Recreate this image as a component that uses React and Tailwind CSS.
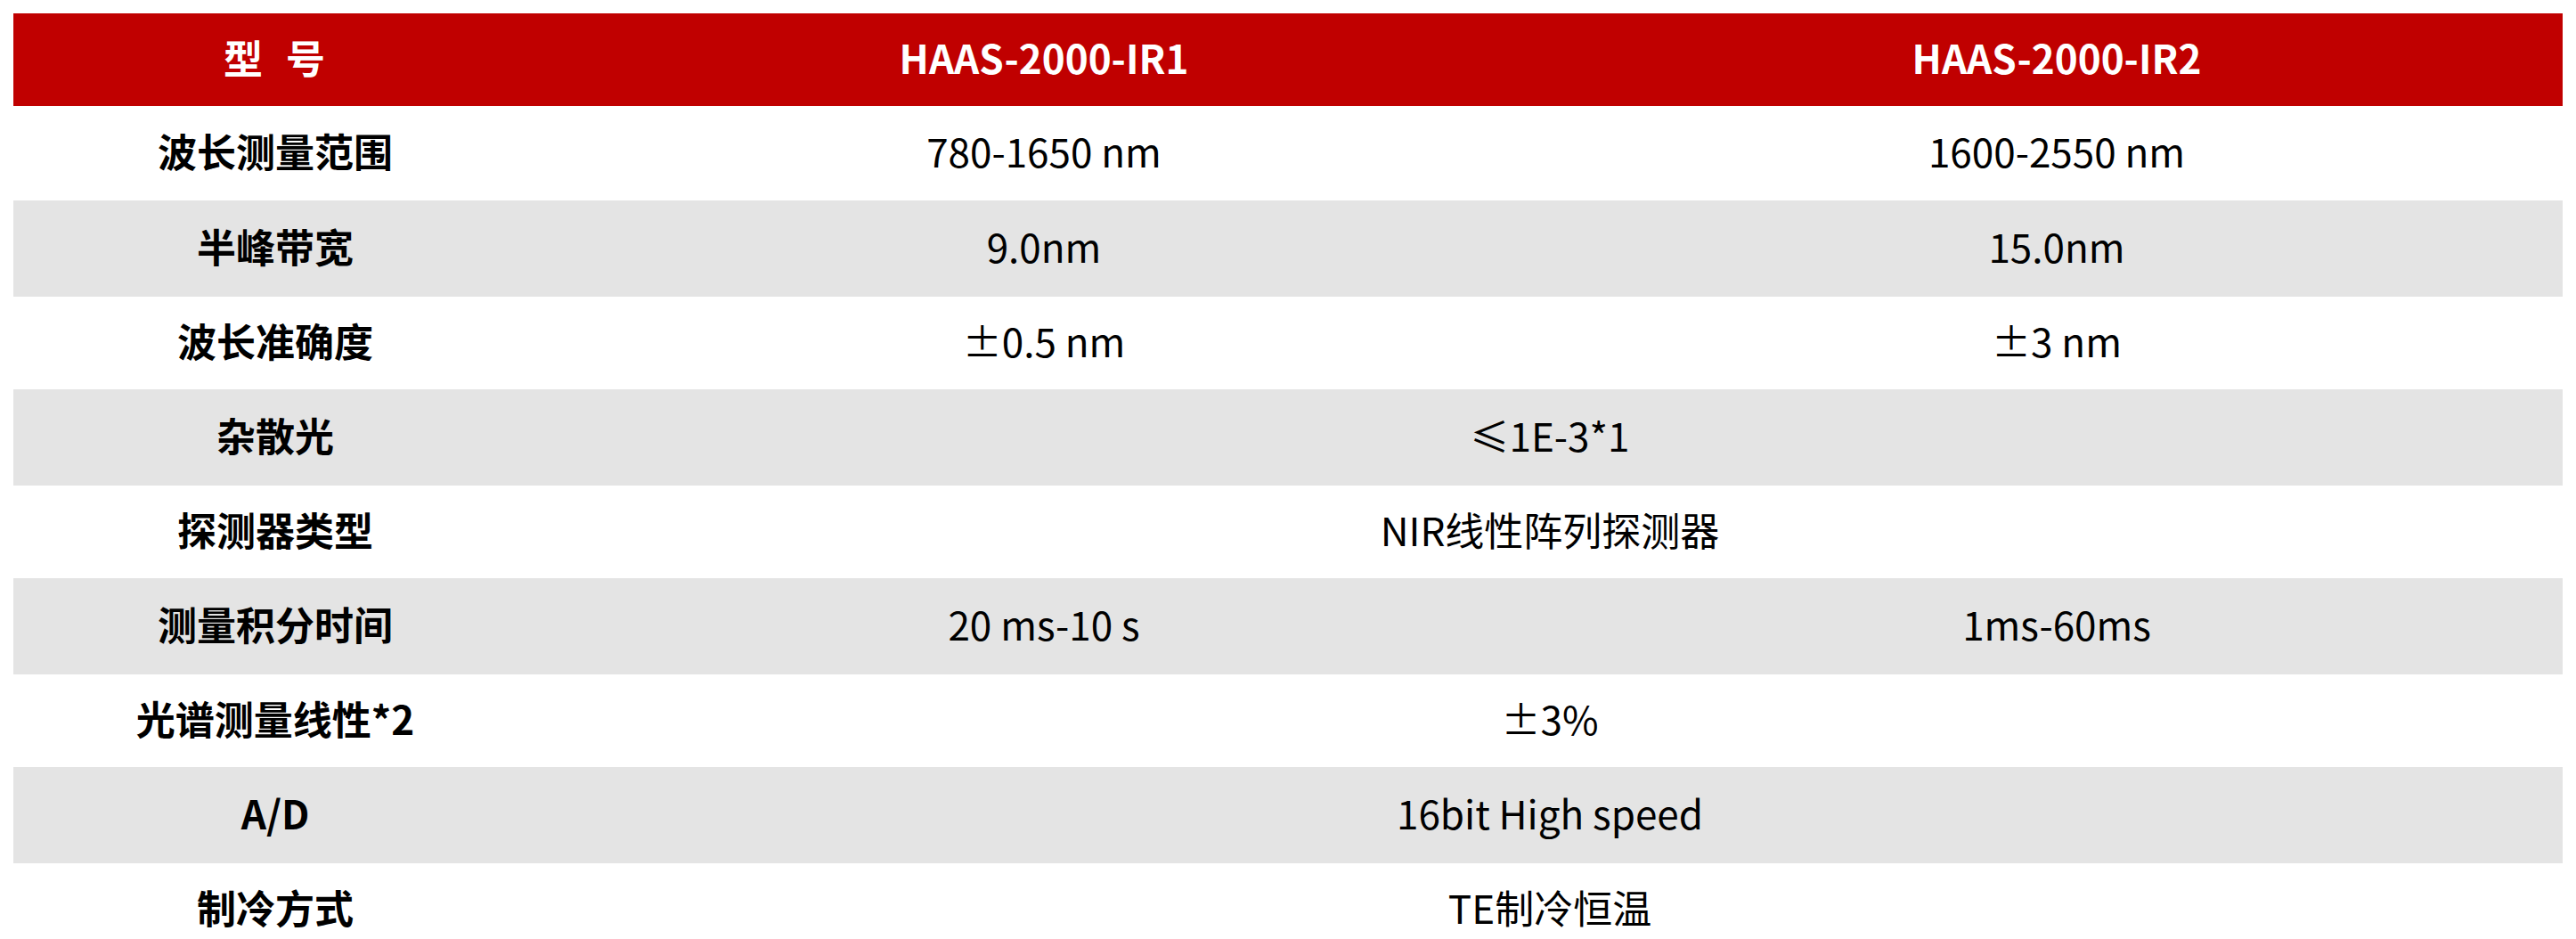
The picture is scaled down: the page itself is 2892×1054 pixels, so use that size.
import React from 'react';

const rows = [
  { label: '波长测量范围', a: '780-1650 nm', b: '1600-2550 nm' },
  { label: '半峰带宽', a: '9.0nm', b: '15.0nm' },
  { label: '波长准确度', a: '±0.5 nm', b: '±3 nm' },
  { label: '杂散光', span: '≤1E-3*1' },
  { label: '探测器类型', span: 'NIR线性阵列探测器' },
  { label: '测量积分时间', a: '20 ms-10 s', b: '1ms-60ms' },
  { label: '光谱测量线性*2', span: '±3%' },
  { label: 'A/D', span: '16bit High speed' },
  { label: '制冷方式', span: 'TE制冷恒温' },
];

const SpecRow = ({ row, index }) => {
  const gray = index % 2 === 1;
  return (
    <div
      className={
        gray
          ? 'grid grid-cols-[588px_1138px_1fr] items-center h-[108px] pb-[7px] bg-[#e4e4e4]'
          : index === 0
          ? 'grid grid-cols-[588px_1138px_1fr] items-center h-[106px] pb-[7px] bg-white'
          : 'grid grid-cols-[588px_1138px_1fr] items-center h-[104px] pb-[7px] bg-white'
      }
    >
      <div className="text-center font-bold">{row.label}</div>
      {row.span ? (
        <div className="col-span-2 text-center">{row.span}</div>
      ) : (
        <>
          <div className="text-center">{row.a}</div>
          <div className="text-center">{row.b}</div>
        </>
      )}
    </div>
  );
};

export default function App() {
  return (
    <div
      lang="zh-CN"
      className="bg-white p-[15px] text-[44px] leading-none text-black font-['Noto_Sans_CJK_SC','Noto_Sans',sans-serif]"
    >
      <div className="grid grid-cols-[588px_1138px_1fr] items-center h-[104px] pb-[7px] bg-[#c00000] text-white font-bold">
        <div className="text-center tracking-[2px]">型&nbsp;&nbsp;号</div>
        <div className="text-center">HAAS-2000-IR1</div>
        <div className="text-center">HAAS-2000-IR2</div>
      </div>
      {rows.map((row, i) => (
        <SpecRow key={row.label} row={row} index={i} />
      ))}
    </div>
  );
}
